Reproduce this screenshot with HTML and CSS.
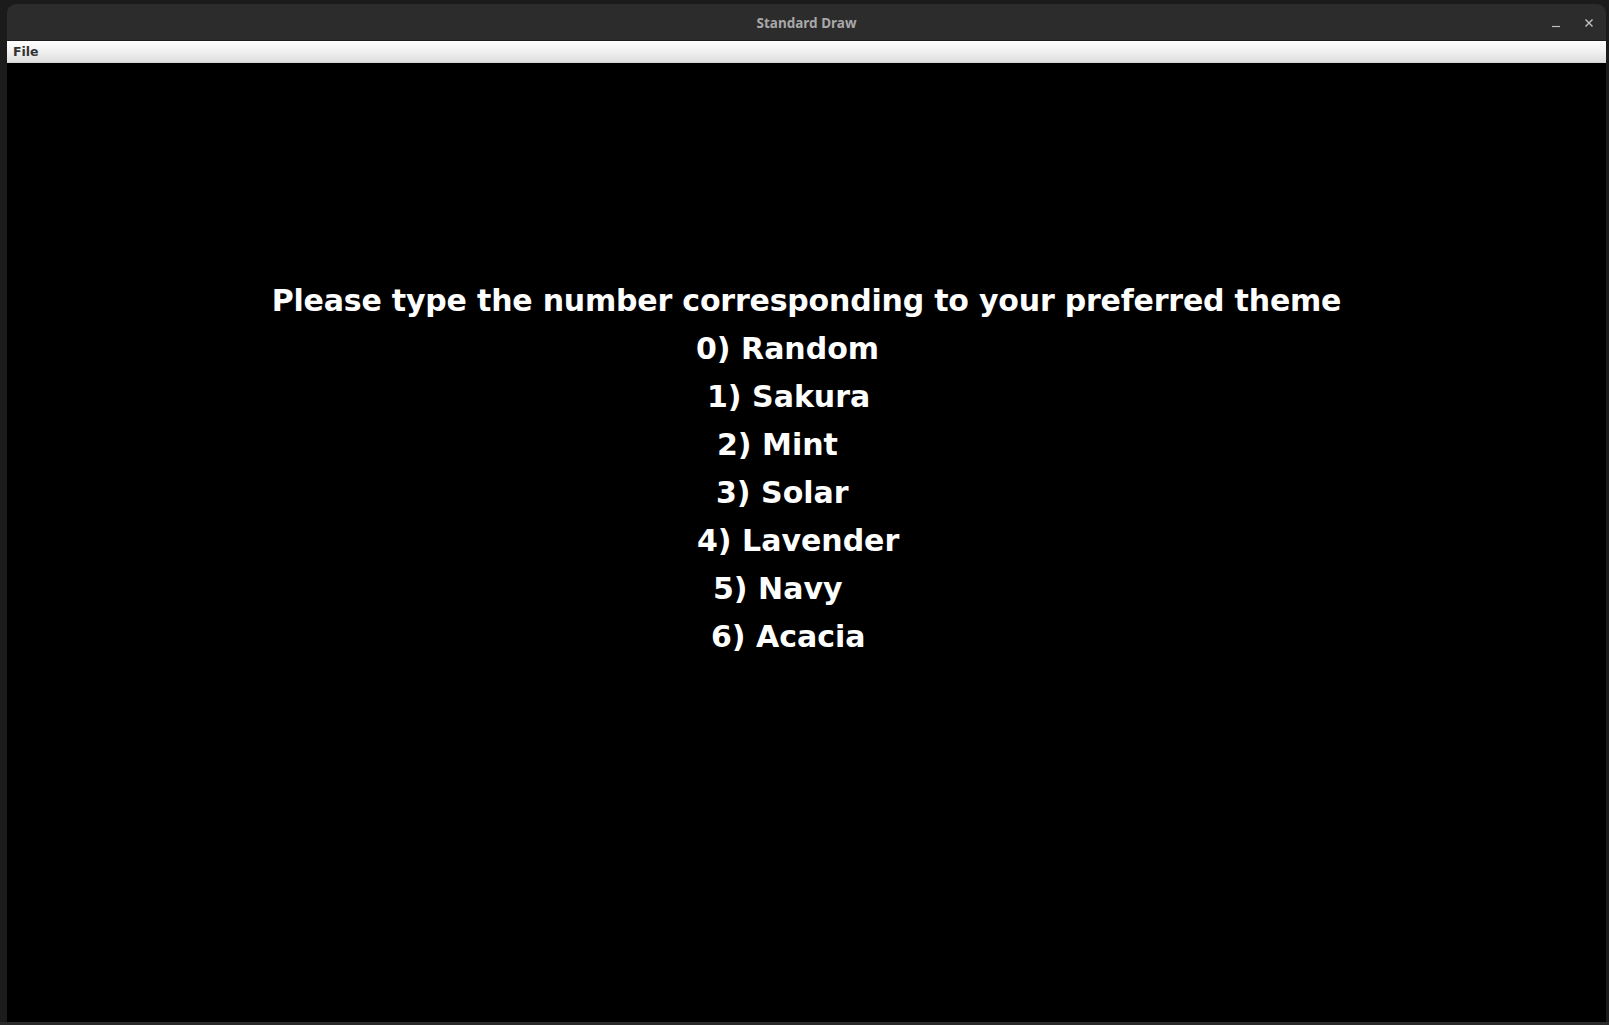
FILE: index.html
```html
<!DOCTYPE html>
<html>
<head>
<meta charset="utf-8">
<title>Standard Draw</title>
<link rel="stylesheet" href="styles.css">
</head>
<body>
<div class="window">
  <div class="titlebar">
    <div class="tb-side"></div>
    <div class="tb-title">Standard Draw</div>
    <div class="tb-side tb-controls">
      <svg class="ctl ctl-min" width="10" height="10" viewBox="0 0 10 10"><line x1="1" y1="8.5" x2="9" y2="8.5" stroke="#bdbdbd" stroke-width="1.2"/></svg>
      <svg class="ctl ctl-close" width="10" height="10" viewBox="0 0 10 10"><path d="M1.5 1.5 L8.5 8.5 M8.5 1.5 L1.5 8.5" stroke="#c4c4c4" stroke-width="1.4"/></svg>
    </div>
  </div>
  <div class="menubar"><span class="menu-item">File</span></div>
  <div class="canvas">
    <div class="heading">Please type the number corresponding to your preferred theme</div>
    <div class="opt opt-0">0) Random</div>
    <div class="opt opt-1">1) Sakura</div>
    <div class="opt opt-2">2) Mint</div>
    <div class="opt opt-3">3) Solar</div>
    <div class="opt opt-4">4) Lavender</div>
    <div class="opt opt-5">5) Navy</div>
    <div class="opt opt-6">6) Acacia</div>
  </div>
</div>
<div class="taskstrip"></div>
</body>
</html>
```
FILE: styles.css
```css
html, body {
  margin: 0;
  padding: 0;
}
body {
  width: 1609px;
  height: 1025px;
  overflow: hidden;
  background: #1b1b1b;
  display: flex;
  flex-direction: column;
}
.window {
  margin: 4px 0 0 7px;
  width: 1599px;
  height: 1018px;
  display: flex;
  flex-direction: column;
}
.titlebar {
  height: 36px;
  background: #2c2c2c;
  border-radius: 9px 9px 0 0;
  display: grid;
  grid-template-columns: 1fr auto 1fr;
  align-items: center;
  box-sizing: border-box;
}
.tb-title {
  font-family: "Noto Sans", "DejaVu Sans", sans-serif;
  font-weight: 700;
  font-size: 13.5px;
  color: #a8a8a8;
  padding-top: 1px;
}
.tb-controls {
  display: flex;
  justify-content: flex-end;
  align-items: center;
  gap: 23px;
  padding-right: 12px;
  padding-top: 1px;
}
.ctl { display: block; }
.menubar {
  height: 21px;
  border-top: 1px solid #1e1e1e;
  border-bottom: 1px solid #d4d4d4;
  background: linear-gradient(#ffffff, #f4f4f4 40%, #dedede);
  display: flex;
  align-items: center;
  box-sizing: content-box;
}
.menu-item {
  font-family: "DejaVu Sans", sans-serif;
  font-weight: 700;
  font-size: 12.5px;
  color: #333333;
  padding-left: 6px;
}
.canvas {
  flex: 1;
  background: #000000;
  padding-top: 214px;
  color: #ffffff;
  font-family: "DejaVu Sans", sans-serif;
  font-weight: 700;
  font-size: 30px;
  line-height: 48px;
  white-space: nowrap;
}
.heading {
  text-align: center;
  letter-spacing: -0.2px;
}
.opt-0 { padding-left: 689px; }
.opt-1 { padding-left: 700px; }
.opt-2 { padding-left: 710px; }
.opt-3 { padding-left: 709px; }
.opt-4 { padding-left: 690px; }
.opt-5 { padding-left: 706px; }
.opt-6 { padding-left: 704px; }
.taskstrip {
  flex: 1;
  background: #2a2a2a;
}
```
